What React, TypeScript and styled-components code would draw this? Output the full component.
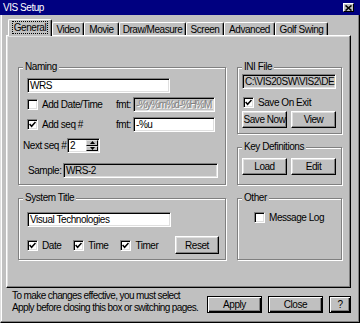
import React from 'react';
import styled, { createGlobalStyle, css } from 'styled-components';

const GlobalStyle = createGlobalStyle`
  html, body {
    margin: 0;
    padding: 0;
  }
  body {
    background: #c0c0c0;
    font-family: "Liberation Sans", Arial, sans-serif;
    font-size: 10px;
    letter-spacing: -0.45px;
    color: #000;
  }
`;

const Window = styled.div`
  width: 360px;
  height: 323px;
  display: flex;
  flex-direction: column;
  background: #c0c0c0;
`;

const TitleBar = styled.div`
  height: 15px;
  flex: none;
  display: flex;
  align-items: center;
  justify-content: space-between;
  padding: 0 6px 0 3px;
  background: #000080;
  color: #fff;
`;

const CloseBox = styled.span`
  box-sizing: border-box;
  width: 11px;
  height: 9px;
  display: flex;
  align-items: center;
  justify-content: center;
  background: #c0c0c0;
  border: 1px solid;
  border-color: #fff #000 #000 #fff;
`;

const Body = styled.div`
  flex: 1;
  display: flex;
  flex-direction: column;
  padding: 4px 8px 0 5px;
  border-left: 1px solid #dfdfdf;
  border-right: 1px solid #000;
  border-bottom: 1px solid #000;
  box-shadow: inset -1px -1px #808080, inset 1px 0 #fff;
`;

const TabRow = styled.div`
  height: 16px;
  display: flex;
  align-items: flex-end;
  padding-left: 2px;
`;

const Tab = styled.div<{ $w: number; $active?: boolean }>`
  box-sizing: border-box;
  width: ${p => p.$w}px;
  height: 13px;
  display: flex;
  align-items: center;
  justify-content: center;
  border-top: 1px solid #fff;
  border-left: 1px solid #fff;
  border-right: 1px solid #000;
  border-radius: 2px 2px 0 0;
  box-shadow: inset -1px 0 #808080;
  background: #c0c0c0;
  white-space: nowrap;

  ${p =>
    p.$active &&
    css`
      height: 17px;
      margin-bottom: -1px;
      position: relative;
      z-index: 1;
      padding-bottom: 2px;
    `}
`;

const Focus = styled.span`
  outline: 1px dotted #000;
  padding: 0 1px;
  line-height: 11px;
`;

const Panel = styled.div`
  box-sizing: border-box;
  height: 253px;
  flex: none;
  display: grid;
  grid-template-columns: 208px 105px;
  column-gap: 11px;
  align-items: start;
  padding: 25px 7px 0 11px;
  border: 1px solid;
  border-color: #fff #000 #000 #fff;
  box-shadow: inset -1px -1px #808080, inset 1px 1px #dfdfdf;
`;

const Column = styled.div`
  display: flex;
  flex-direction: column;
  gap: 7px;
`;

const Group = styled.fieldset<{ $h: number }>`
  box-sizing: border-box;
  height: ${p => p.$h}px;
  min-width: 0;
  margin: 0;
  padding: 0;
  border: 1px solid #808080;
  box-shadow: inset 1px 1px #fff, 1px 1px #fff;
`;

const Legend = styled.legend`
  margin-left: 4px;
  padding: 0 2px;
  line-height: 12px;
  background: #c0c0c0;
`;

const GroupBody = styled.div<{ $pt: number; $pl: number; $pr?: number }>`
  display: flex;
  flex-direction: column;
  align-items: flex-start;
  padding: ${p => p.$pt}px ${p => p.$pr ?? 0}px 0 ${p => p.$pl}px;
`;

const Row = styled.div<{ $mt?: number; $indent?: number; $h?: number; $gap?: number }>`
  align-self: stretch;
  display: flex;
  align-items: center;
  height: ${p => p.$h ?? 15}px;
  margin-top: ${p => p.$mt ?? 0}px;
  margin-left: ${p => p.$indent ?? 0}px;
  gap: ${p => p.$gap ?? 0}px;
  white-space: nowrap;
`;

const Label = styled.span<{ $w?: number }>`
  flex: none;
  width: ${p => (p.$w ? `${p.$w}px` : 'auto')};
`;

const sunken = css`
  border: 1px solid;
  border-color: #808080 #fff #fff #808080;
  box-shadow: inset 1px 1px #000, inset -1px -1px #dfdfdf;
`;

const Field = styled.div<{ $w: number; $readonly?: boolean; $dim?: boolean }>`
  box-sizing: border-box;
  flex: none;
  width: ${p => p.$w}px;
  height: 15px;
  padding: 0 2px;
  line-height: 13px;
  white-space: nowrap;
  overflow: hidden;
  background: ${p => (p.$readonly ? '#c0c0c0' : '#fff')};
  color: ${p => (p.$dim ? '#808080' : '#000')};
  text-shadow: ${p => (p.$dim ? '1px 1px #fff' : 'none')};
  letter-spacing: ${p => (p.$dim ? '-0.85px' : 'inherit')};
  ${sunken}
`;

const Box = styled.span`
  box-sizing: border-box;
  flex: none;
  width: 11px;
  height: 11px;
  display: flex;
  align-items: center;
  justify-content: center;
  background: #fff;
  ${sunken}
`;

const CheckItem = styled.label<{ $w?: number }>`
  flex: none;
  display: flex;
  align-items: center;
  gap: 4px;
  width: ${p => (p.$w ? `${p.$w}px` : 'auto')};
`;

const Button = styled.button<{ $w: number; $h?: number; $framed?: boolean; $push?: boolean }>`
  box-sizing: border-box;
  flex: none;
  width: ${p => p.$w}px;
  height: ${p => p.$h ?? 17}px;
  margin: 0 0 0 ${p => (p.$push ? 'auto' : '0')};
  padding: 0;
  font: inherit;
  letter-spacing: inherit;
  color: #000;
  background: #c0c0c0;
  border: 1px solid;
  border-color: #fff #000 #000 #fff;
  box-shadow: inset -1px -1px #808080, inset 1px 1px #dfdfdf;

  ${p =>
    p.$framed &&
    css`
      border-color: #000;
      box-shadow: inset 1px 1px #fff, inset -1px -1px #000, inset -2px -2px #808080;
    `}
`;

const Spin = styled.div`
  box-sizing: border-box;
  flex: none;
  width: 33px;
  height: 15px;
  display: flex;
  background: #fff;
  ${sunken}
`;

const SpinValue = styled.span`
  flex: 1;
  padding-left: 2px;
  line-height: 13px;
`;

const SpinArrows = styled.div`
  width: 12px;
  display: flex;
  flex-direction: column;
  margin: 1px 1px 1px 0;
`;

const SpinButton = styled.span`
  box-sizing: border-box;
  flex: 1;
  display: flex;
  align-items: center;
  justify-content: center;
  background: #c0c0c0;
  border: 1px solid;
  border-color: #dfdfdf #000 #000 #dfdfdf;
`;

const Footer = styled.div`
  flex: 1;
  display: flex;
  align-items: flex-start;
  padding: 2px 0 0 6px;
`;

const Note = styled.div`
  flex: 1;
  min-width: 0;
  line-height: 12px;
  letter-spacing: -0.6px;
  white-space: nowrap;
`;

const FooterButtons = styled.div`
  flex: none;
  display: flex;
  gap: 6px;
  margin-top: 6px;
`;

const Check = ({ on }: { on?: boolean }) => (
  <Box>
    {on && (
      <svg width="7" height="7" viewBox="0 0 7 7">
        <path d="M0.6 3.1 L2.6 5.3 L6.5 1" fill="none" stroke="#000" strokeWidth="1.5" />
      </svg>
    )}
  </Box>
);

const Arrow = ({ up }: { up?: boolean }) => (
  <svg width="5" height="3" viewBox="0 0 5 3">
    <path d={up ? 'M0 3 L2.5 0 L5 3 Z' : 'M0 0 L2.5 3 L5 0 Z'} fill="#000" />
  </svg>
);

const tabs = [
  { name: 'General', w: 44 },
  { name: 'Video', w: 32 },
  { name: 'Movie', w: 35 },
  { name: 'Draw/Measure', w: 67 },
  { name: 'Screen', w: 38 },
  { name: 'Advanced', w: 51 },
  { name: 'Golf Swing', w: 53 },
];

const App: React.FC = () => {
  return (
    <Window>
      <GlobalStyle />
      <TitleBar>
        <span>VIS Setup</span>
        <CloseBox>
          <svg width="7" height="6" viewBox="0 0 7 6">
            <path d="M0.5 0.5 L6.5 5.5 M6.5 0.5 L0.5 5.5" stroke="#000" strokeWidth="1.6" />
          </svg>
        </CloseBox>
      </TitleBar>

      <Body>
        <TabRow>
          {tabs.map((t, i) => (
            <Tab key={t.name} $w={t.w} $active={i === 0}>
              {i === 0 ? <Focus>{t.name}</Focus> : t.name}
            </Tab>
          ))}
        </TabRow>

        <Panel>
          <Column>
            <Group $h={124}>
              <Legend>Naming</Legend>
              <GroupBody $pt={5} $pl={8}>
                <Field $w={143}>WRS</Field>
                <Row $mt={4}>
                  <CheckItem $w={89}>
                    <Check />
                    Add Date/Time
                  </CheckItem>
                  <Label $w={17}>fmt:</Label>
                  <Field $w={82} $readonly $dim>
                    -%y%m%d-%H%M
                  </Field>
                </Row>
                <Row $mt={5}>
                  <CheckItem $w={89}>
                    <Check on />
                    Add seq #
                  </CheckItem>
                  <Label $w={17}>fmt:</Label>
                  <Field $w={82}>-%u</Field>
                </Row>
                <Row $mt={6} $indent={-4}>
                  <Label $w={44}>Next seq #</Label>
                  <Spin>
                    <SpinValue>2</SpinValue>
                    <SpinArrows>
                      <SpinButton>
                        <Arrow up />
                      </SpinButton>
                      <SpinButton>
                        <Arrow />
                      </SpinButton>
                    </SpinArrows>
                  </Spin>
                </Row>
                <Row $mt={10} $indent={1}>
                  <Label $w={35}>Sample:</Label>
                  <Field $w={155} $readonly>
                    WRS-2
                  </Field>
                </Row>
              </GroupBody>
            </Group>

            <Group $h={68}>
              <Legend>System Title</Legend>
              <GroupBody $pt={8} $pl={8} $pr={6}>
                <Field $w={144}>Visual Technologies</Field>
                <Row $mt={9} $h={18} $gap={12}>
                  <CheckItem>
                    <Check on />
                    Date
                  </CheckItem>
                  <CheckItem>
                    <Check on />
                    Time
                  </CheckItem>
                  <CheckItem>
                    <Check on />
                    Timer
                  </CheckItem>
                  <Button $w={44} $h={18} $push>
                    Reset
                  </Button>
                </Row>
              </GroupBody>
            </Group>
          </Column>

          <Column>
            <Group $h={73}>
              <Legend>INI File</Legend>
              <GroupBody $pt={1} $pl={4}>
                <Field $w={94} $readonly>
                  C:\VIS20SW\VIS2\DEFAULT.INI
                </Field>
                <Row $mt={8} $h={11} $indent={1}>
                  <CheckItem>
                    <Check on />
                    Save On Exit
                  </CheckItem>
                </Row>
                <Row $mt={3} $h={17} $gap={4}>
                  <Button $w={45}>Save Now</Button>
                  <Button $w={45}>View</Button>
                </Row>
              </GroupBody>
            </Group>

            <Group $h={44}>
              <Legend>Key Definitions</Legend>
              <GroupBody $pt={5} $pl={4}>
                <Row $h={17} $gap={4}>
                  <Button $w={45}>Load</Button>
                  <Button $w={45}>Edit</Button>
                </Row>
              </GroupBody>
            </Group>

            <Group $h={68}>
              <Legend>Other</Legend>
              <GroupBody $pt={8} $pl={4}>
                <Row $h={11} $indent={12}>
                  <CheckItem>
                    <Check />
                    Message Log
                  </CheckItem>
                </Row>
              </GroupBody>
            </Group>
          </Column>
        </Panel>

        <Footer>
          <Note>
            To make changes effective, you must select
            <br />
            Apply before closing this box or switching pages.
          </Note>
          <FooterButtons>
            <Button $w={55} $framed>
              Apply
            </Button>
            <Button $w={55} $framed>
              Close
            </Button>
            <Button $w={22} $framed>
              ?
            </Button>
          </FooterButtons>
        </Footer>
      </Body>
    </Window>
  );
};

export default App;
